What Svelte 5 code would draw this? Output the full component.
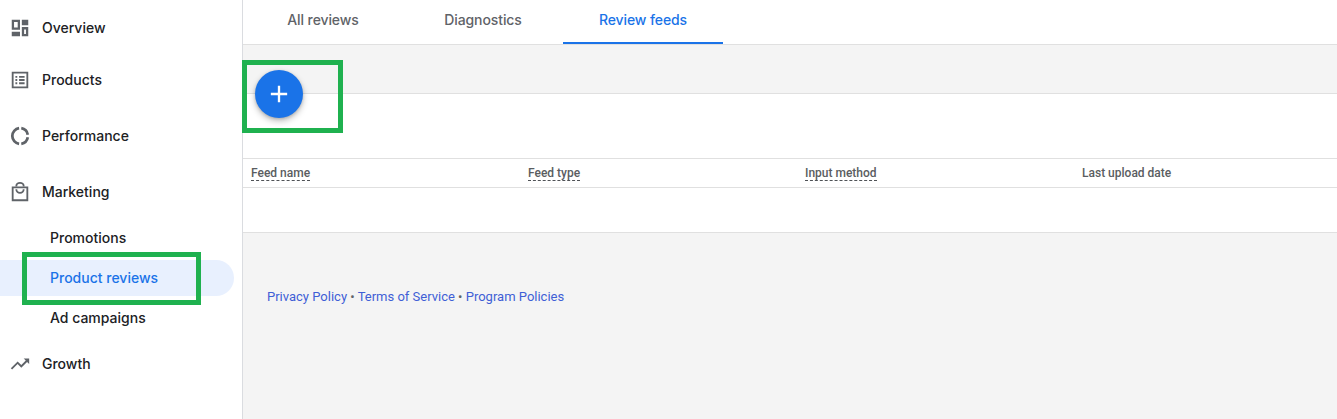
<script lang="ts">
  const tabs = [
    { label: 'All reviews', active: false },
    { label: 'Diagnostics', active: false },
    { label: 'Review feeds', active: true },
  ];
  const columns = [
    { label: 'Feed name', hint: true },
    { label: 'Feed type', hint: true },
    { label: 'Input method', hint: true },
    { label: 'Last upload date', hint: false },
  ];
  const subItems = [
    { label: 'Promotions', active: false },
    { label: 'Product reviews', active: true },
    { label: 'Ad campaigns', active: false },
  ];
</script>

<div class="page">
  <nav class="sidebar">
    <a class="item overview">
      <svg viewBox="0 0 24 24" width="22" height="22"><path d="M3 3h9v11H3zm2.500 2.500v6h4v-6zM14 3h7v6h-7zM3 16h9v5H3zM14 11h7v10h-7zm2.500 2.500v5h2v-5z" fill-rule="evenodd" /></svg>
      <span>Overview</span>
    </a>
    <a class="item products">
      <svg viewBox="0 0 24 24" width="22" height="22"><path d="M3 3h18v18H3zm2 2v14h14V5zM7 7.500h2v2H7zm4 0h6v2h-6zm-4 3.500h2v2H7zm4 0h6v2h-6zm-4 3.500h2v2H7zm4 0h6v2h-6z" fill-rule="evenodd" /></svg>
      <span>Products</span>
    </a>
    <a class="item wide">
      <svg viewBox="0 0 24 24" width="22" height="22"><g fill="none" stroke-width="3"><path d="M11 3.400A8.700 8.700 0 0 0 11 20.600" /><path d="M13.400 3.500A8.700 8.700 0 0 1 20.500 10.600" /><path d="M20.500 13.400A8.700 8.700 0 0 1 13.400 20.500" /></g></svg>
      <span>Performance</span>
    </a>
    <a class="item wide marketing">
      <svg viewBox="0 0 24 24" width="22" height="22"><path d="M3 6h18v16H3zm2 2v12h14V8z" fill-rule="evenodd" /><path class="line" d="M8 6V5.500a4 3.500 0 0 1 8 0V6M8 9a4 4 0 0 0 8 0" /></svg>
      <span>Marketing</span>
    </a>
    {#each subItems as sub (sub.label)}
      <a class="sub" class:active={sub.active}><span>{sub.label}</span></a>
    {/each}
    <a class="item growth">
      <svg viewBox="0 0 24 24" width="22" height="22"><path d="M16 6l2.300 2.300-4.900 4.900-4-4L2 16.600 3.400 18l6-6 4 4 6.300-6.300L22 12V6z" /></svg>
      <span>Growth</span>
    </a>
    <div class="mark mark-nav"></div>
  </nav>

  <main class="content">
    <div class="tabs">
      {#each tabs as tab (tab.label)}
        <a class="tab" class:active={tab.active}>{tab.label}</a>
      {/each}
    </div>

    <div class="band">
      <button class="fab" aria-label="Add feed">
        <svg viewBox="0 0 24 24" width="28" height="28"><path d="M19 13h-6v6h-2v-6H5v-2h6V5h2v6h6z" /></svg>
      </button>
      <div class="mark mark-fab"></div>
    </div>

    <section class="card">
      <div class="spacer"></div>
      <div class="thead">
        {#each columns as col (col.label)}
          <div class="th"><span class:hint={col.hint}>{col.label}</span></div>
        {/each}
      </div>
      <div class="empty"></div>
    </section>

    <footer class="footer">
      <a>Privacy Policy</a> <i>•</i> <a>Terms of Service</a> <i>•</i> <a>Program Policies</a>
    </footer>
  </main>
</div>

<style>
  :global(body) {
    margin: 0;
    background: #fff;
  }
  .page {
    display: flex;
    height: 419px;
    overflow: hidden;
    font-family: Roboto, sans-serif;
    color: #202124;
  }
  .sidebar {
    position: relative;
    display: flex;
    flex-direction: column;
    flex: 0 0 242px;
    padding-top: 4px;
    border-right: 1px solid #dadce0;
    font-family: Inter, sans-serif;
    font-size: 14px;
    font-weight: 450;
    box-sizing: content-box;
  }
  .item {
    display: flex;
    align-items: center;
    gap: 11px;
    flex: none;
    height: 48px;
    padding-left: 9px;
  }
  .item span,
  .sub span {
    padding-bottom: 2px;
  }
  .item svg {
    fill: #5f6368;
    stroke: #5f6368;
    stroke-width: 0;
    flex: none;
  }
  .item .line {
    fill: none;
    stroke-width: 2;
  }
  .products {
    margin-top: 4px;
  }
  .wide {
    margin-top: 8px;
  }
  .marketing {
    margin-bottom: 2px;
  }
  .growth {
    margin-top: 2px;
  }
  .sub {
    display: flex;
    align-items: center;
    flex: none;
    height: 36px;
    margin: 2px 8px 2px 0;
    padding-left: 50px;
    border-radius: 0 18px 18px 0;
  }
  .sub.active {
    background: #e8f0fe;
    color: #1a73e8;
  }
  .mark {
    position: absolute;
    box-sizing: border-box;
    border: 5px solid #1fb14f;
    pointer-events: none;
  }
  .mark-nav {
    left: 22px;
    top: 252px;
    width: 179px;
    height: 53px;
  }
  .content {
    flex: 1;
    display: flex;
    flex-direction: column;
    background: #f4f4f4;
    min-width: 0;
  }
  .tabs {
    display: flex;
    height: 44px;
    background: #fff;
    border-bottom: 1px solid #e0e0e0;
    box-sizing: content-box;
  }
  .tab {
    width: 160px;
    height: 42px;
    line-height: 40px;
    text-align: center;
    font-family: Inter, sans-serif;
    font-size: 14px;
    font-weight: 450;
    letter-spacing: -0.1px;
    color: #5f6368;
  }
  .tab.active {
    color: #1a73e8;
    border-bottom: 2px solid #1a73e8;
  }
  .band {
    position: relative;
    height: 48px;
    border-bottom: 1px solid #e0e0e0;
  }
  .fab {
    position: absolute;
    left: 12px;
    top: 25px;
    z-index: 2;
    display: flex;
    align-items: center;
    justify-content: center;
    width: 48px;
    height: 48px;
    padding: 0;
    border: 0;
    border-radius: 50%;
    background: #1a73e8;
    box-shadow: 0 3px 6px rgba(0, 0, 0, 0.25), 0 1px 3px rgba(0, 0, 0, 0.15);
  }
  .fab svg {
    fill: #fff;
  }
  .mark-fab {
    left: -1px;
    top: 15px;
    width: 101px;
    height: 73px;
    z-index: 3;
  }
  .card {
    background: #fff;
    border-bottom: 1px solid #e0e0e0;
  }
  .spacer {
    height: 64px;
    border-bottom: 1px solid #e0e0e0;
  }
  .thead {
    display: grid;
    grid-template-columns: repeat(4, 277px);
    align-items: center;
    height: 28px;
    border-bottom: 1px solid #e0e0e0;
  }
  .th {
    padding-left: 8px;
    font-size: 12px;
    font-weight: 500;
    color: #5a5d61;
  }
  .hint {
    border-bottom: 1px dashed #4f5256;
  }
  .empty {
    height: 44px;
  }
  .footer {
    padding: 55px 0 0 24px;
    font-size: 13px;
    line-height: 18px;
    color: #5f6368;
  }
  .footer a {
    color: #3f5fd6;
  }
  .footer i {
    font-style: normal;
  }
</style>
